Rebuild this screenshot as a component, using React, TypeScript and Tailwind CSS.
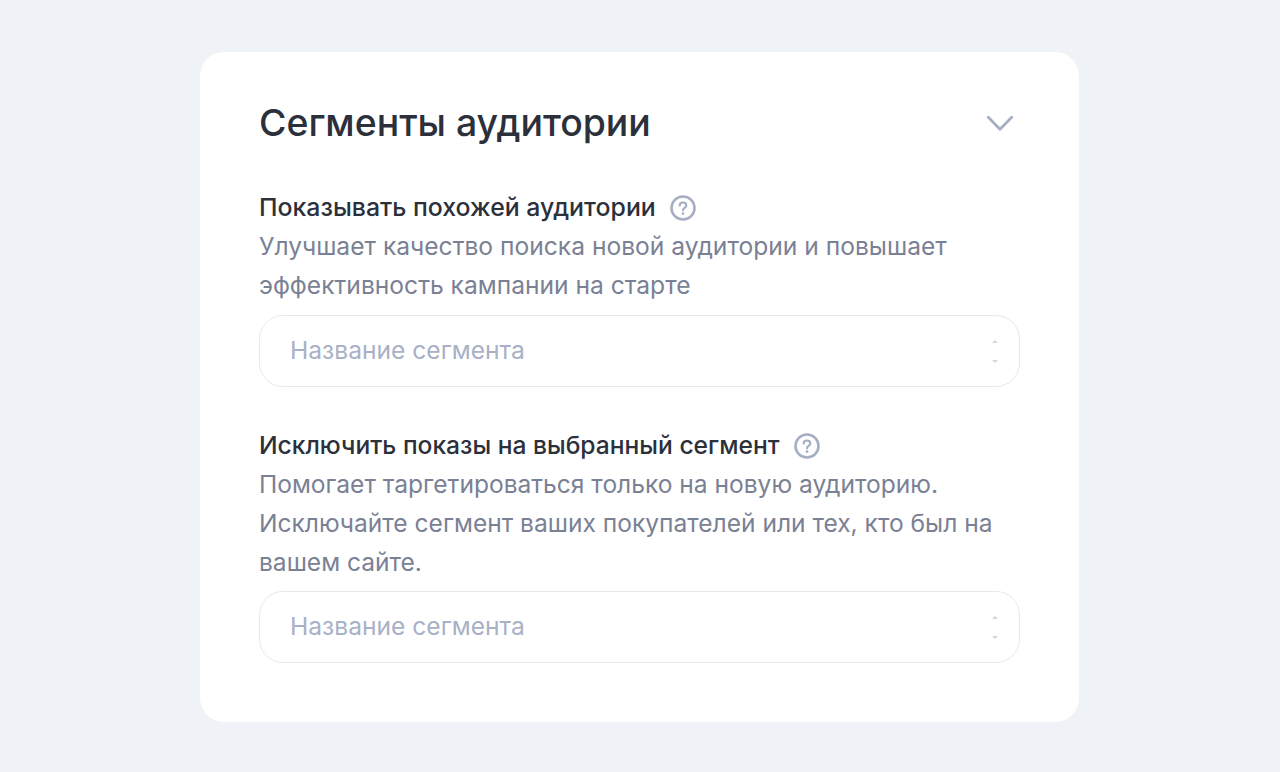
const HelpIcon = () => (
  <svg width="26" height="26" viewBox="0 0 26 26" fill="none" className="shrink-0">
    <circle cx="13" cy="13" r="11.5" stroke="#a6aec3" strokeWidth="2.6" />
    <path
      d="M9.7 10.6c0-1.9 1.4-3.1 3.3-3.1s3.3 1.2 3.3 2.9c0 2.4-3.3 2.6-3.3 4.9"
      stroke="#a6aec3"
      strokeWidth="2.2"
      strokeLinecap="round"
    />
    <circle cx="13" cy="18.6" r="1.4" fill="#a6aec3" />
  </svg>
);

const SegmentInput = () => (
  <div className="mt-[9px] flex h-[72px] items-center justify-between rounded-[24px] border border-[#e6e9f0] bg-white pl-[30px] pr-[21px]">
    <span className="pb-[2px] text-[24.6px] text-[#a8b1c6]">Название сегмента</span>
    <div className="flex flex-col gap-[17px]">
      <span className="h-0 w-0 border-x-[3px] border-b-[3px] border-x-transparent border-b-[#d4d7dd]" />
      <span className="h-0 w-0 border-x-[3px] border-t-[3px] border-x-transparent border-t-[#d4d7dd]" />
    </div>
  </div>
);

const App = () => {
  return (
    <div className="h-[772px] w-[1280px] overflow-hidden bg-[#eff2f7] pl-[200px] pt-[52px] font-['Inter',sans-serif]">
      <div className="h-[670px] w-[879px] rounded-[24px] bg-white pl-[59px] pr-[59px] pt-[43px]">
        <div className="flex h-[56px] items-center justify-between">
          <h2 className="text-[37.4px] font-medium text-[#2b303b]">Сегменты аудитории</h2>
          <svg width="30" height="18" viewBox="0 0 30 18" fill="none" className="mr-[5px]">
            <path d="M3.3 3.3L15 15.2 26.7 3.3" stroke="#a6aec3" strokeWidth="2.8" strokeLinecap="round" strokeLinejoin="round" />
          </svg>
        </div>

        <div className="mt-[37px]">
          <div className="flex h-[39px] items-center gap-[14px]">
            <span className="text-[24.85px] font-medium text-[#2b303b]">Показывать похожей аудитории</span>
            <HelpIcon />
          </div>
          <p className="text-[24.6px] leading-[39px] text-[#7a8194]">
            Улучшает качество поиска новой аудитории и повышает
            <br />
            эффективность кампании на старте
          </p>
          <div className="pt-[1px]">
            <SegmentInput />
          </div>
        </div>

        <div className="mt-[39px]">
          <div className="flex h-[39px] items-center gap-[14px]">
            <span className="text-[24.6px] font-medium text-[#2b303b]">Исключить показы на выбранный сегмент</span>
            <HelpIcon />
          </div>
          <p className="text-[24.55px] leading-[39px] text-[#7a8194]">
            Помогает таргетироваться только на новую аудиторию.
            <br />
            Исключайте сегмент ваших покупателей или тех, кто был на
            <br />
            вашем сайте.
          </p>
          <SegmentInput />
        </div>
      </div>
    </div>
  );
};

export default App;
